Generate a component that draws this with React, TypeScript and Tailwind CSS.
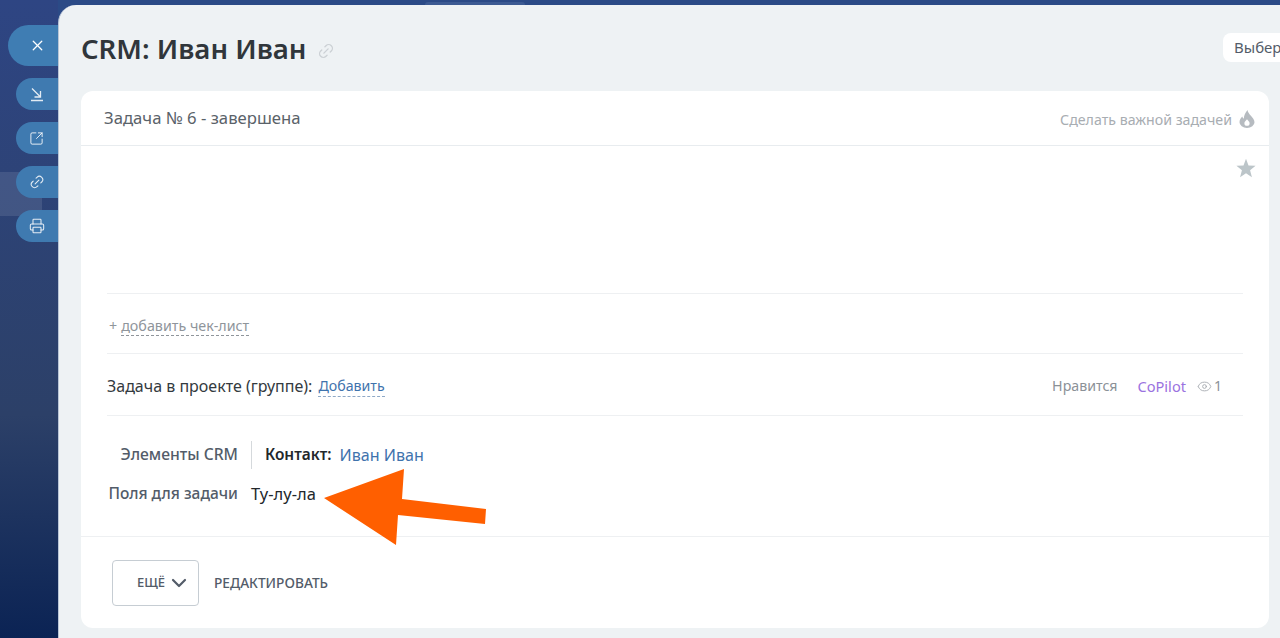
import { ChevronDown, Eye, Link2, Printer, SquareArrowOutUpRight, X } from "lucide-react";

function SideButton({ children, wide }: { children: React.ReactNode; wide?: boolean }) {
  return (
    <div
      className={
        wide
          ? "ml-2 flex h-[41px] items-center rounded-l-[21px] bg-[#3f7db3] pl-[21px] text-white"
          : "ml-4 flex h-8 items-center rounded-l-2xl bg-[#3f7ab0] pl-[13px] text-white/85"
      }
    >
      {children}
    </div>
  );
}

export default function App() {
  return (
    <div className="relative flex h-[638px] w-[1280px] overflow-hidden bg-[#2b4a86] font-['Noto_Sans','Open_Sans',sans-serif]">
      {/* left slider rail */}
      <div className="relative w-[58px] shrink-0 bg-gradient-to-b from-[#2e4583] via-[#2c4068] via-[65%] to-[#0b2354] pt-[25px]">
        <div className="absolute left-0 top-[172px] h-11 w-[42px] bg-white/10" />
        <div className="relative flex flex-col">
          <SideButton wide>
            <X size={17} strokeWidth={1.8} />
          </SideButton>
          <div className="mt-3 flex flex-col gap-3">
            <SideButton>
              <svg width="16" height="16" viewBox="0 0 16 16" fill="none" stroke="currentColor" strokeWidth="1.3">
                <path d="M3 2.500l8.500 8.500M11.500 5v6h-6M2 14.500h12" />
              </svg>
            </SideButton>
            <SideButton>
              <SquareArrowOutUpRight size={15} strokeWidth={1.6} />
            </SideButton>
            <SideButton>
              <Link2 size={16} strokeWidth={1.6} className="-rotate-45" />
            </SideButton>
            <SideButton>
              <Printer size={16} strokeWidth={1.6} />
            </SideButton>
          </div>
        </div>
      </div>

      {/* tab of the slider behind this one */}
      <div className="absolute left-[425px] top-[2px] h-[3px] w-[100px] rounded-t bg-[#3c5a92]" />

      {/* task panel */}
      <div className="relative mt-[5px] flex h-[633px] min-w-0 flex-1 flex-col rounded-tl-[18px] border-l border-[#b9c5d6] bg-[#eef2f4] pl-[22px] pr-[11px]">
        <div className="flex h-[86px] shrink-0 items-center justify-between">
          <div className="flex items-center gap-[10px] pt-[1px]">
            <h1 className="text-[27.6px] font-semibold leading-none text-[#30363b]">CRM: Иван Иван</h1>
            <Link2 size={18} strokeWidth={1.8} className="mt-1 -rotate-45 text-[#ccd1d5]" />
          </div>
          <div className="-mr-[11px] -mt-[2px] flex h-[29px] w-[57px] items-center overflow-hidden whitespace-nowrap rounded-l-lg bg-white pl-[11px] text-[15px] text-[#535c69]">
            Выберите
          </div>
        </div>

        <div className="flex h-[537px] shrink-0 flex-col rounded-xl bg-white">
          <div className="flex h-[55px] shrink-0 items-center justify-between border-b border-[#e8ecef] pl-[23px] pr-[14px]">
            <span className="text-[16.7px] text-[#5a6269]">Задача № 6 - завершена</span>
            <div className="flex items-center gap-[7px] pt-[3px] text-[14.2px] text-[#a8adb2]">
              <span>Сделать важной задачей</span>
              <svg width="16" height="18" viewBox="0 0 16 18" fill="#b6bbc0">
                <path
                  fillRule="evenodd"
                  d="M8.500 0c.4 2.600 1.800 3.800 3.400 5.800C13.500 7.800 15.500 9.700 15.500 12.200a7.500 5.800 0 0 1-15 0c0-2.400 1.300-4 2.700-5.600.3 1 .8 1.700 1.600 2.100C4.900 5.400 6.500 2.600 8.500 0zM8 9.300c-1 1.500-2.600 2.300-2.600 3.900a2.600 2.600 0 0 0 5.200 0C10.600 11.600 9 10.800 8 9.300z"
                />
              </svg>
            </div>
          </div>

          <div className="flex h-[147px] shrink-0 justify-end pr-[13px] pt-[12px]">
            <svg width="20" height="20" viewBox="0 0 24 24" fill="#bcc5c9">
              <path d="M12 1l3 7.900 8.500.5-6.600 5.400 2.200 8.200L12 18.400l-7.100 4.600 2.200-8.200L.5 9.400 9 8.900z" />
            </svg>
          </div>

          <div className="mx-[26px] flex h-[61px] shrink-0 items-center border-y border-[#eef0f2] pl-[2px] pt-[5px] text-[14.3px] text-[#8f959b]">
            <span className="mr-[4px]">+</span>
            <span className="border-b border-dashed border-[#8f959b] leading-[18px]">добавить чек-лист</span>
          </div>

          <div className="mx-[26px] flex h-[62px] shrink-0 items-center justify-between border-b border-[#eef0f2] pt-[3px] text-sm">
            <div className="flex items-center gap-[6px] text-[#333a40]">
              <span className="text-[16px]">Задача в проекте (группе):</span>
              <span className="border-b border-dashed border-[#8fa9c7] text-[14.2px] leading-[20px] text-[#3f73ad]">Добавить</span>
            </div>
            <div className="flex items-center pr-[21px] text-[#8b9197]">
              <span className="text-[14.2px]">Нравится</span>
              <span className="ml-[20px] text-[14.6px] text-[#9a72e0]">CoPilot</span>
              <Eye size={15} strokeWidth={1.5} className="ml-[11px] text-[#a9adb2]" />
              <span className="ml-[2px] text-[14px]">1</span>
            </div>
          </div>

          <div className="flex h-[121px] shrink-0 flex-col border-b border-[#eef0f2] pt-[24px]">
            <div className="flex h-[30px] items-center">
              <span className="w-[157px] text-right text-[15.7px] font-medium text-[#535c69]">Элементы CRM</span>
              <span className="ml-[13px] h-7 w-px bg-[#d5d9dc]" />
              <span className="ml-[13px] text-[15.4px] font-semibold text-[#22272b]">Контакт:</span>
              <span className="ml-[8px] text-[16.1px] text-[#3f73ad]">Иван Иван</span>
            </div>
            <div className="mt-[13px] flex h-[22px] items-center">
              <span className="w-[157px] text-right text-[15.5px] font-medium text-[#535c69]">Поля для задачи</span>
              <span className="ml-[13px] text-[16.5px] text-[#22272b]">Ту-лу-ла</span>
            </div>
          </div>

          <div className="flex flex-1 items-start pl-[31px] pt-[23px]">
            <button className="flex h-[46px] w-[87px] items-center gap-[2px] rounded border border-[#c6cdd3] pl-[24px] text-[13px] font-medium text-[#535c69]">
              ЕЩЁ
              <ChevronDown size={24} strokeWidth={2.2} />
            </button>
            <span className="ml-[15px] flex h-[46px] items-center text-[13.7px] font-medium text-[#535c69]">РЕДАКТИРОВАТЬ</span>
          </div>
        </div>
      </div>

      {/* annotation arrow laid over the shot */}
      <svg className="absolute left-0 top-0" width="1280" height="638" fill="#ff5f00">
        <path d="M324 498L404 469L402 499L486 509L485 524L398 515L396 545Z" />
      </svg>
    </div>
  );
}
